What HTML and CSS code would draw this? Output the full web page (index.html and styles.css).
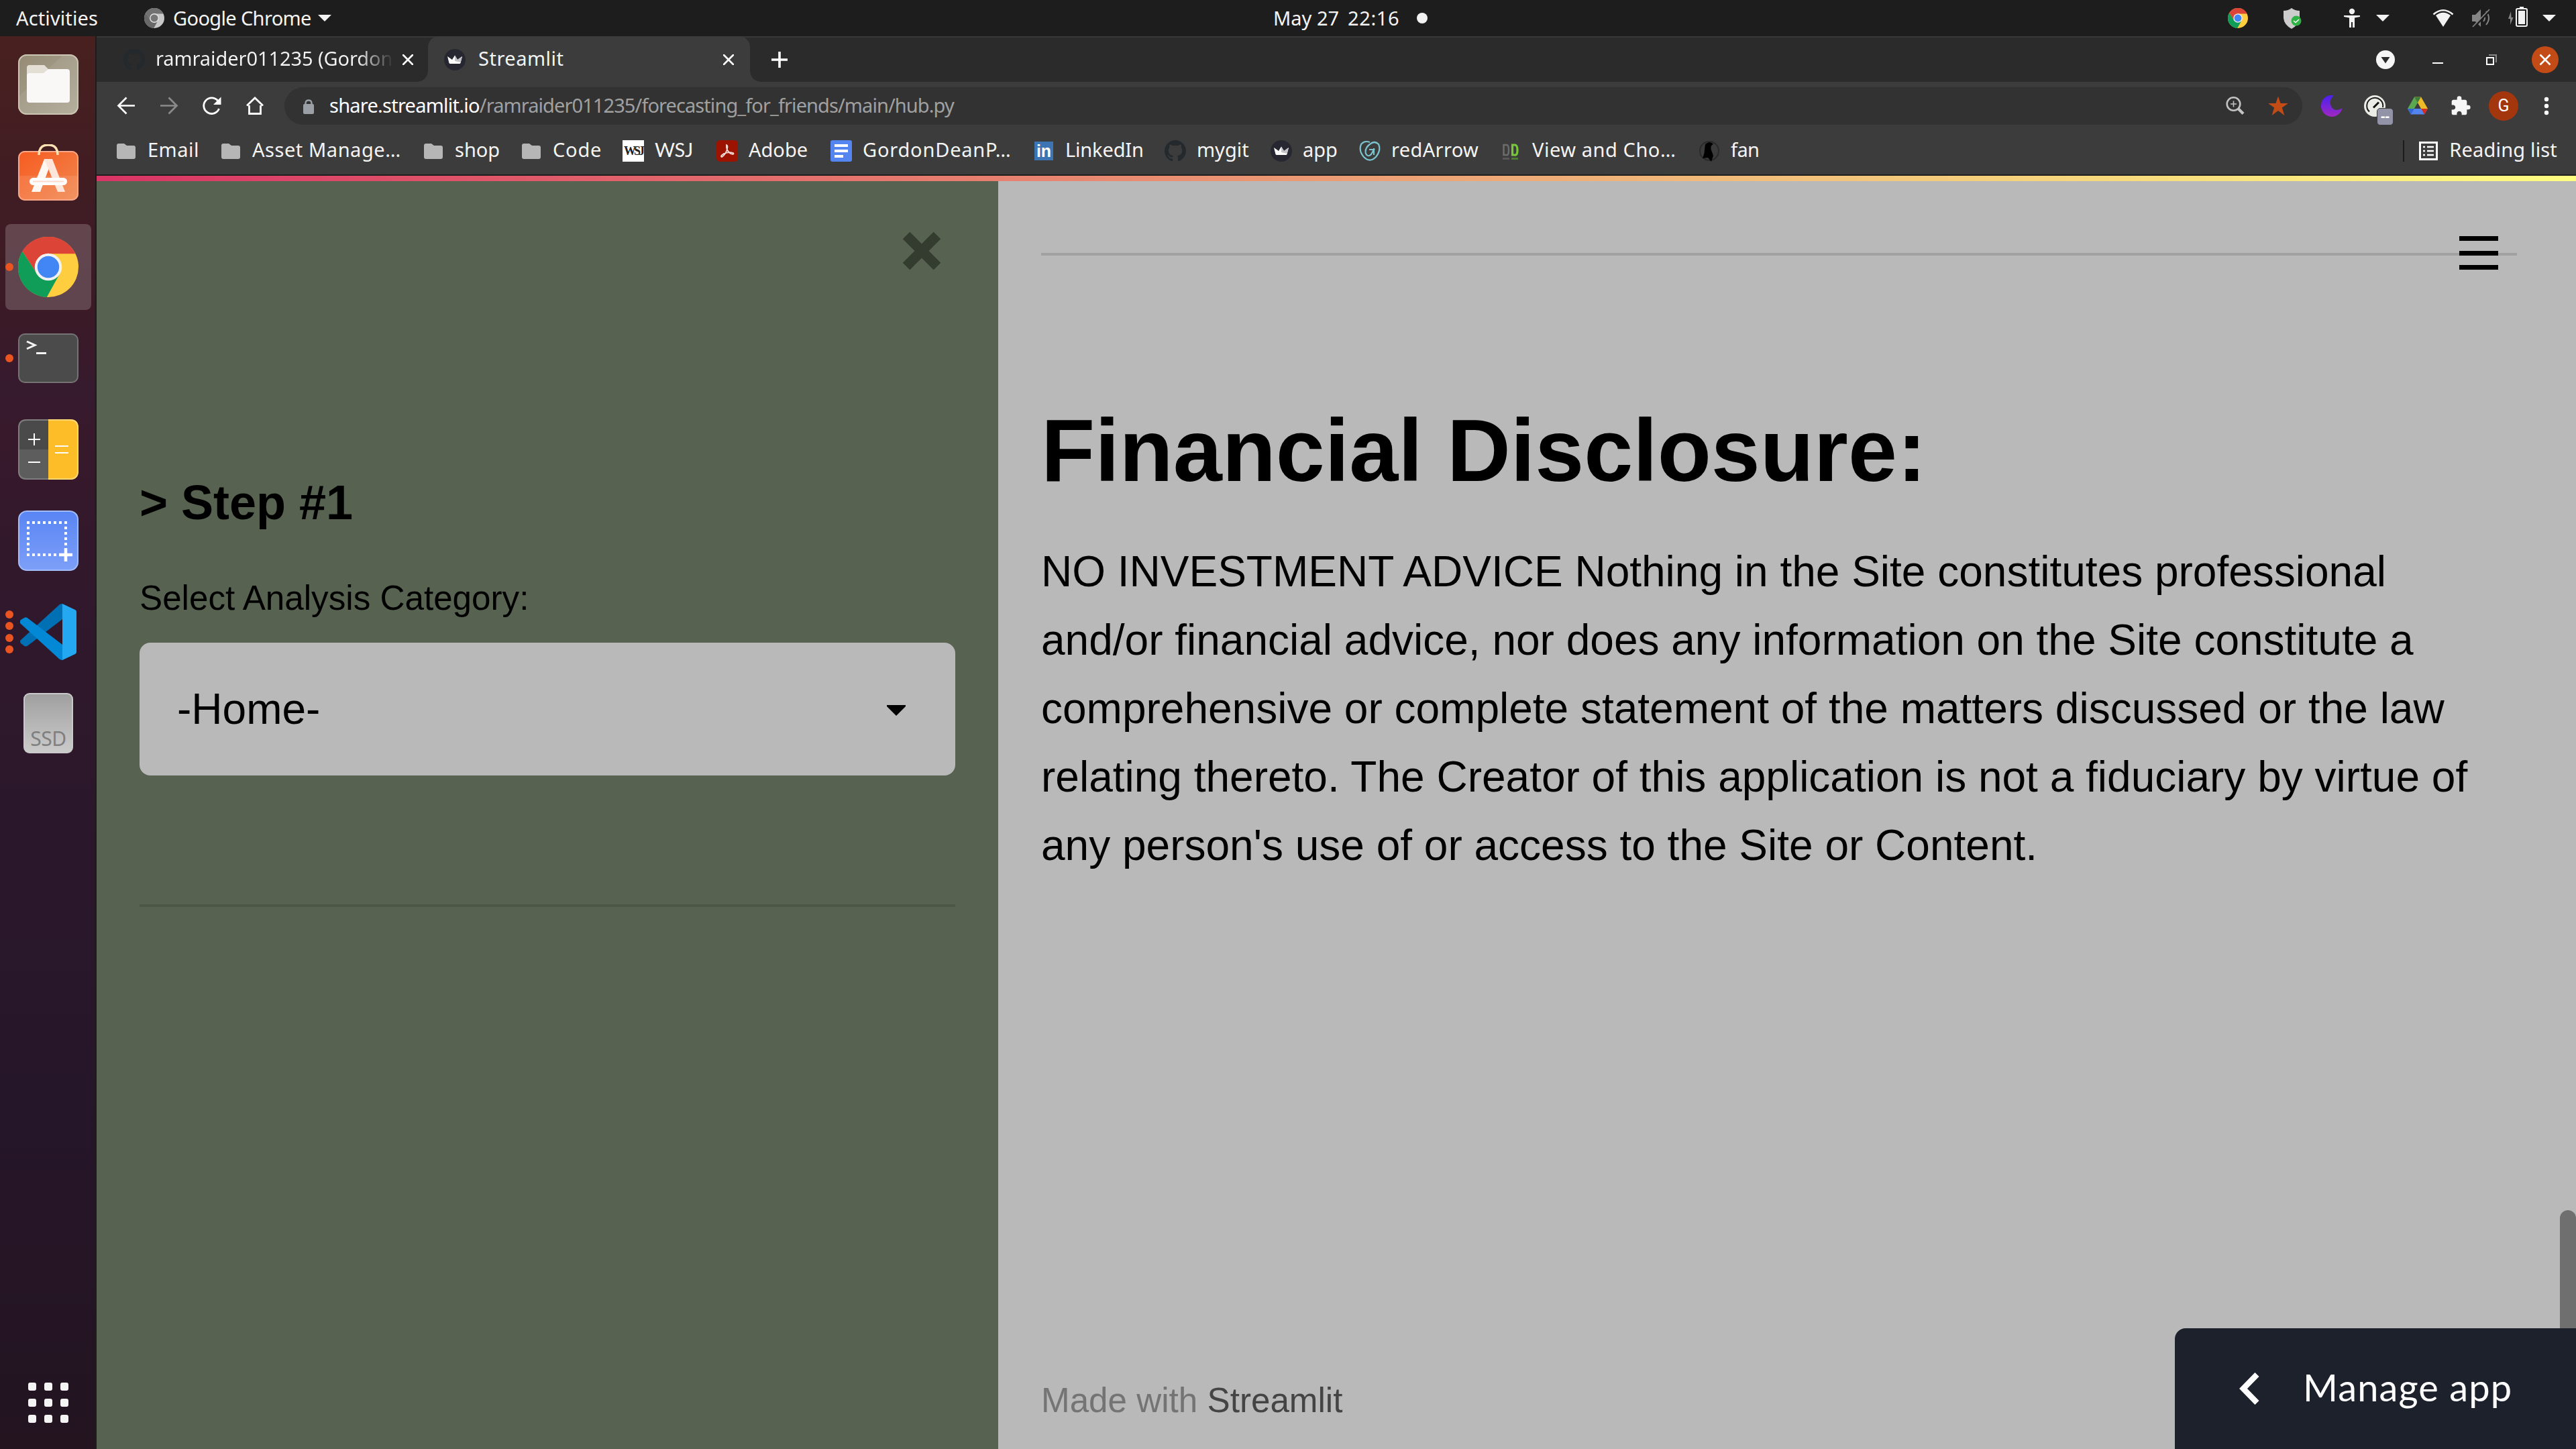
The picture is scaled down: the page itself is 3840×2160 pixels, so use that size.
FILE: index.html
```html
<!DOCTYPE html>
<html lang="en">
<head>
<meta charset="utf-8">
<title>Streamlit</title>
<link rel="stylesheet" href="styles.css">
</head>
<body>
<svg class="defs" width="0" height="0" aria-hidden="true">
  <defs>
    <symbol id="chrome" viewBox="0 0 100 100">
      <circle cx="50" cy="50" r="50" fill="#ffcd40"/>
      <path d="M7 24A50 50 0 0 1 94.9 28H50L31 61Z" fill="#db4437"/>
      <path d="M7 24L31 61L50 72L69 61L47.5 100A50 50 0 0 1 7 24Z" fill="#0f9d58"/>
      <circle cx="50" cy="50" r="22.5" fill="#f1f1f1"/>
      <circle cx="50" cy="50" r="18" fill="#4285f4"/>
    </symbol>
    <symbol id="chrome-gray" viewBox="0 0 100 100">
      <circle cx="50" cy="50" r="50" fill="#c8c8c8"/>
      <path d="M7 24A50 50 0 0 1 94.9 28H50L31 61Z" fill="#717171"/>
      <path d="M7 24L31 61L50 72L69 61L47.5 100A50 50 0 0 1 7 24Z" fill="#686868"/>
      <circle cx="50" cy="50" r="23" fill="#e6e6e6"/>
      <circle cx="50" cy="50" r="18.500" fill="#777"/>
    </symbol>
    <symbol id="github" viewBox="0 0 16 16">
      <path fill="#24292e" d="M8 0C3.58 0 0 3.58 0 8c0 3.54 2.29 6.53 5.47 7.59.4.07.55-.17.55-.38 0-.19-.01-.82-.01-1.49-2.01.37-2.53-.49-2.69-.94-.09-.23-.48-.94-.82-1.13-.28-.15-.68-.52-.01-.53.63-.01 1.08.58 1.23.82.72 1.21 1.87.87 2.33.66.07-.52.28-.87.51-1.07-1.78-.2-3.64-.89-3.64-3.95 0-.87.31-1.59.82-2.15-.08-.2-.36-1.02.08-2.12 0 0 .67-.21 2.2.82.64-.18 1.32-.27 2-.27s1.36.09 2 .27c1.53-1.04 2.2-.82 2.2-.82.44 1.1.16 1.92.08 2.12.51.56.82 1.27.82 2.15 0 3.07-1.87 3.75-3.65 3.95.29.25.54.73.54 1.48 0 1.07-.01 1.93-.01 2.2 0 .21.15.46.55.38A8.01 8.01 0 0 0 16 8c0-4.42-3.58-8-8-8z"/>
    </symbol>
    <symbol id="crown" viewBox="0 0 32 32">
      <circle cx="16" cy="16" r="16" fill="#262730"/>
      <path d="M5 11L12 16L16 9.500L20 16L27 11L24.500 21Q24 22 23 22H9Q8 22 7.500 21Z" fill="#fff"/>
      <path d="M16 9.500L20 16L27 11L24.500 20L16 18Z" fill="#c4c4c8"/>
    </symbol>
    <symbol id="folder" viewBox="0 0 32 32">
      <path d="M2 8Q2 5 5 5H13L17 8H27Q30 8 30 11V25Q30 28 27 28H5Q2 28 2 25Z" fill="#b6b6b6"/>
    </symbol>
    <symbol id="caret" viewBox="0 0 20 10"><path d="M0 0H20L10 10Z" fill="#f2f2f2"/></symbol>
    <symbol id="close" viewBox="0 0 16 16"><path d="M1 1L15 15M15 1L1 15" stroke="#fff" stroke-width="2.600" stroke-linecap="round" fill="none"/></symbol>
  </defs>
</svg>

<header class="topbar">
  <div class="topbar-left">
    <span class="activities">Activities</span>
    <svg class="i30"><use href="#chrome-gray"/></svg>
    <span class="app-name">Google Chrome</span>
    <svg class="caret"><use href="#caret"/></svg>
  </div>
  <div class="clock"><span class="date">May 27</span><span class="time">22:16</span><i class="clock-dot"></i></div>
  <div class="tray">
    <svg class="i30 tray-chrome"><use href="#chrome"/></svg>
    <svg class="i32 tray-shield" viewBox="0 0 32 32">
      <path d="M16 1Q21 5 28 5V16Q27 26 16 32Q5 26 4 16V5Q11 5 16 1Z" fill="#ccc"/>
      <circle cx="23" cy="20" r="7.500" fill="#2fb344"/><path d="M19 20L22 22.500L27 18" stroke="#fff" stroke-width="1.500" fill="none"/>
    </svg>
    <svg class="i32 tray-access" viewBox="0 0 32 32">
      <circle cx="16" cy="6" r="4.200" fill="#f2f2f2"/><path d="M4 12H28V14L20 15.500V30H17V22H15V30H12V15.500L4 14Z" fill="#f2f2f2"/>
    </svg>
    <svg class="caret"><use href="#caret"/></svg>
    <svg class="i32 tray-wifi" viewBox="0 0 32 32">
      <path d="M1.500 10.500Q16 -2 30.500 10.500" stroke="#f2f2f2" stroke-width="2.600" fill="none"/><path d="M5 12Q16 3.500 27 12L16 29Z" fill="#f2f2f2"/>
    </svg>
    <svg class="i32 tray-mute" viewBox="0 0 32 32">
      <path d="M3 11H8L16 3V29L8 21H3Z" fill="#858585"/>
      <path d="M20 11Q24 16 20 21M24 6Q32 16 24 26" stroke="#858585" stroke-width="2" fill="none"/>
      <path d="M5 30L30 4" stroke="#1d1d1d" stroke-width="3.500"/><path d="M4 29L29 3" stroke="#858585" stroke-width="1.800"/>
    </svg>
    <svg class="i32 tray-battery" viewBox="0 0 32 32">
      <path d="M5 7L1 18H4V27L8.500 16H5.500Z" fill="#858585"/>
      <path d="M18 0H24V3H18Z" fill="#f2f2f2"/><rect x="13" y="3" width="16" height="26" rx="2" fill="none" stroke="#f2f2f2" stroke-width="2"/><rect x="16" y="6" width="10" height="20" fill="#f2f2f2"/>
    </svg>
    <svg class="caret tray-menu"><use href="#caret"/></svg>
  </div>
</header>

<div class="desktop">
  <nav class="dock">
    <div class="dock-item">
      <svg width="94" height="94" viewBox="-2 -2 94 94">
        <defs><linearGradient id="gf" x2="1" y2="1"><stop offset="0" stop-color="#958b75"/><stop offset="1" stop-color="#b0a997"/></linearGradient></defs>
        <rect x="0" y="0" width="90" height="90" rx="13" fill="url(#gf)"/><path d="M2 62L66 2H78Q88 2 88 12V88H12Q2 88 2 78Z" fill="#fff" opacity=".07"/>
        <rect x="1" y="1" width="88" height="88" rx="12" fill="none" stroke="#cbc5b4" stroke-width="2"/>
        <path d="M13 34V20Q13 16 17 16H39L45 22V34Z" fill="#e3dfd4"/>
        <path d="M17 28H38L45 22H73Q77 22 77 26V68Q77 72 73 72H17Q13 72 13 68V32Q13 28 17 28Z" fill="#f9f8f7"/>
      </svg>
    </div>
    <div class="dock-item">
      <svg width="94" height="94" viewBox="-2 -2 94 94">
        <defs><linearGradient id="gs" x2="1" y2="1"><stop offset="0" stop-color="#f75b20"/><stop offset="1" stop-color="#f08850"/></linearGradient></defs>
        <rect x="0" y="8" width="90" height="74" rx="10" fill="url(#gs)"/><path d="M1 45H89V72Q89 81 80 81H10Q1 81 1 72Z" fill="#fff" opacity=".1"/>
        <rect x="1" y="9" width="88" height="72" rx="9" fill="none" stroke="#f8a888" stroke-width="2"/>
        <path d="M31 14Q31 -1 45 -1Q59 -1 59 14" fill="none" stroke="#fde3b4" stroke-width="3.500"/>
        <path d="M39 20H51L33 69H20Z" fill="#fff8f2"/><path d="M39 20H51L70 69H59Z" fill="#fde5da"/>
        <rect x="17" y="48" width="56" height="11" rx="5.500" fill="#fff"/><path d="M22 53.500H68" stroke="#fbd9cc" stroke-width="2"/>
      </svg>
    </div>
    <div class="dock-item active">
      <i class="runs"><b></b></i>
      <svg width="90" height="90"><use href="#chrome"/></svg>
    </div>
    <div class="dock-item">
      <i class="runs"><b></b></i>
      <svg width="94" height="94" viewBox="-2 -2 94 94">
        <rect x="1" y="9" width="88" height="72" rx="9" fill="#4b4b4b" stroke="#747474" stroke-width="2"/>
        <path d="M13 20L25 25.500L13 31" fill="none" stroke="#f4f4f4" stroke-width="3"/><path d="M27 37.500H42" stroke="#f4f4f4" stroke-width="3"/>
      </svg>
    </div>
    <div class="dock-item">
      <svg width="94" height="94" viewBox="-2 -2 94 94">
        <path d="M45 0H13Q0 0 0 13V45H45Z" fill="#4a4a4a"/><path d="M0 45H45V90H13Q0 90 0 77Z" fill="#5d5d5d"/>
        <path d="M45 0H77Q90 0 90 13V77Q90 90 77 90H45Z" fill="#fdbd29"/>
        <path d="M45 1H13Q1 1 1 13V77Q1 89 13 89H45" fill="none" stroke="#7e7e7e" stroke-width="2"/><path d="M45 1H77Q89 1 89 13V77Q89 89 77 89H45" fill="none" stroke="#ffd873" stroke-width="2"/>
        <path d="M15 30H33M24 21V39M15 64H33M55 40H75M55 50H75" stroke="#fff" stroke-width="2"/>
      </svg>
    </div>
    <div class="dock-item">
      <svg width="94" height="94" viewBox="-2 -2 94 94">
        <defs><linearGradient id="gc" x2="0" y2="1"><stop offset="0" stop-color="#5985f4"/><stop offset="1" stop-color="#7d9ff8"/></linearGradient></defs>
        <rect x="1" y="1" width="88" height="88" rx="12" fill="url(#gc)" stroke="#a3bcfb" stroke-width="2"/>
        <path d="M13 18H73" stroke="#fff" stroke-width="4" stroke-dasharray="4 4"/><path d="M13 66H58" stroke="#fff" stroke-width="4" stroke-dasharray="4 4"/>
        <path d="M15 24V66M71 24V56" stroke="#fff" stroke-width="4" stroke-dasharray="4 4"/>
        <path d="M61 66H81M71 56V76" stroke="#fff" stroke-width="4.500"/>
      </svg>
    </div>
    <div class="dock-item">
      <i class="runs"><b></b><b></b><b></b><b></b></i>
      <svg width="84" height="84" viewBox="0 0 84 84">
        <path d="M59 1Q61 0 63 0V23L12 62Q8 65 5 62L1 59Q-1 56 1 54Z" fill="#0070b4"/>
        <path d="M0 29Q-1 26 1 24L6 21Q9 19 12 22L63 61V84Q60 84 58 82Z" fill="#0388d6"/>
        <path d="M63 0L82 9Q84 10 84 12V72Q84 74 82 75L63 84Z" fill="#25a8f2"/>
      </svg>
    </div>
    <div class="dock-item">
      <div class="ssd">SSD</div>
    </div>
    <div class="app-grid"><b></b><b></b><b></b><b></b><b></b><b></b><b></b><b></b><b></b></div>
  </nav>

  <section class="window">
    <div class="tabstrip">
      <div class="tab">
        <svg class="i32"><use href="#github"/></svg>
        <span class="tab-title fade">ramraider011235 (Gordon</span>
        <svg class="i16"><use href="#close"/></svg>
      </div>
      <div class="tab tab-active">
        <svg class="i32"><use href="#crown"/></svg>
        <span class="tab-title streamlit">Streamlit</span>
        <svg class="i16"><use href="#close"/></svg>
      </div>
      <svg class="new-tab" width="24" height="24"><path d="M12 0V24M0 12H24" stroke="#fff" stroke-width="3.600"/></svg>
      <div class="controls">
        <svg width="28" height="28"><circle cx="14" cy="14" r="14" fill="#f6f6f6"/><path d="M7.500 10H20.500L14 19.500Z" fill="#2b2b2b"/></svg>
        <svg width="16" height="28"><path d="M0 19H16" stroke="#fff" stroke-width="2"/></svg>
        <svg width="16" height="16"><path d="M4 1H15V12" stroke="#888" stroke-width="2" fill="none"/><rect x="1" y="5" width="10" height="10" fill="none" stroke="#fff" stroke-width="2"/></svg>
        <svg width="40" height="40"><circle cx="20" cy="20" r="20" fill="#c34b16"/><path d="M12.500 12.500L27.500 27.500M27.500 12.500L12.500 27.500" stroke="#fff" stroke-width="2.600"/></svg>
      </div>
    </div>

    <div class="toolbar">
      <div class="nav">
        <svg class="i32" viewBox="0 0 32 32"><path d="M29 15.500H5M16.500 3.500L4.500 15.500L16.500 27.500" stroke="#fff" stroke-width="2.700" fill="none"/></svg>
        <svg class="i32" viewBox="0 0 32 32"><path d="M3 15.500H27M15.500 3.500L27.500 15.500L15.500 27.500" stroke="#8a8a8a" stroke-width="2.700" fill="none"/></svg>
        <svg class="i32" viewBox="0 0 32 32"><path d="M26.500 20A11.800 11.800 0 1 1 24.500 8" stroke="#fff" stroke-width="2.800" fill="none"/><path d="M29.500 2.500V14H18Z" fill="#fff"/></svg>
        <svg class="i32" viewBox="0 0 32 32"><path d="M7.500 15V27.500H24.500V15M4 15.500L16 4L28 15.500" stroke="#fff" stroke-width="2.800" fill="none"/></svg>
      </div>
      <div class="omnibox">
        <svg class="lock" width="16" height="22"><path d="M3.500 8V6Q3.500 1.500 8 1.500T12.500 6V8" stroke="#9aa0a6" stroke-width="2.400" fill="none"/><rect y="7" width="16" height="15" rx="2" fill="#9aa0a6"/></svg>
        <span class="url"><span class="host">share.streamlit.io</span><span class="path">/ramraider011235/forecasting_for_friends/main/hub.py</span></span>
        <svg class="i32 zoomed" viewBox="0 0 32 32"><circle cx="13.500" cy="13" r="9.800" fill="none" stroke="#c3c3c3" stroke-width="2.600"/><path d="M13.500 8.500V17.500M9 13H18" stroke="#c3c3c3" stroke-width="1.600"/><path d="M20.500 20L28 27.500" stroke="#c3c3c3" stroke-width="4.200"/></svg>
        <svg class="i32" viewBox="0 0 32 32"><path d="M16 1.500L19.600 12H31L21.800 18.500L25.400 30L16 23L6.600 30L10.200 18.500L1 12H12.400Z" fill="#c34b16"/></svg>
      </div>
      <div class="extensions">
        <svg class="i32" viewBox="0 0 32 32"><defs><linearGradient id="gm" x2="0" y2="1"><stop offset="0" stop-color="#4a20f0"/><stop offset="1" stop-color="#a028c0"/></linearGradient></defs><path d="M19 .2A16 16 0 1 0 31.500 19.500Q21 25 16 18Q10 9 19 .2Z" fill="url(#gm)"/></svg>
        <span class="gauge">
          <svg class="i32" viewBox="0 0 32 32"><circle cx="16" cy="16" r="16" fill="#ecece6"/><path d="M8 24.500A12 12 0 1 1 28 18" stroke="#1c1c1c" stroke-width="2" fill="none"/><path d="M14 18.500L22 10.500" stroke="#111" stroke-width="3"/></svg>
          <i class="badge">--</i>
        </span>
        <svg class="i32" viewBox="0 0 32 32"><path d="M11 2.500H21L31 20H21L16 11Z" fill="#eebb28"/><path d="M11 2.500L1 20L6 28.500L16 11Z" fill="#5aa84f"/><path d="M11 2.500H21L16 11Z" fill="#3f7d3a"/><path d="M1 20H31L26 28.500H6Z" fill="#5485ee"/><path d="M21 20H31L26 28.500Z" fill="#d62d20"/><path d="M1 20H11L6 28.500Z" fill="#3367d6"/></svg>
        <svg class="i32" viewBox="0 0 24 24"><path fill="#f6f6f6" d="M20.500 11H19V7c0-1.100-.9-2-2-2h-4V3.500a2.500 2.500 0 0 0-5 0V5H4c-1.100 0-1.990.9-1.990 2v3.800H3.500c1.490 0 2.700 1.210 2.700 2.700s-1.210 2.700-2.700 2.700H2V20c0 1.100.9 2 2 2h3.800v-1.500c0-1.490 1.210-2.700 2.700-2.700 1.490 0 2.700 1.210 2.700 2.700V22H17c1.100 0 2-.9 2-2v-4h1.500a2.500 2.500 0 0 0 0-5z"/></svg>
        <span class="avatar">G</span>
        <svg class="i32" viewBox="0 0 32 32"><circle cx="16" cy="6" r="3.200" fill="#fff"/><circle cx="16" cy="16" r="3.200" fill="#fff"/><circle cx="16" cy="26" r="3.200" fill="#fff"/></svg>
      </div>
    </div>

    <div class="bookmarks">
      <div class="bm"><svg class="i32"><use href="#folder"/></svg><span class="l50">Email</span></div>
      <div class="bm"><svg class="i32"><use href="#folder"/></svg><span class="l60">Asset Manage…</span></div>
      <div class="bm"><svg class="i32"><use href="#folder"/></svg><span class="l0">shop</span></div>
      <div class="bm"><svg class="i32"><use href="#folder"/></svg><span class="l70">Code</span></div>
      <div class="bm"><span class="wsj">WSJ</span><span class="wsj-label">WSJ</span></div>
      <div class="bm"><svg class="i32" viewBox="0 0 32 32"><rect width="32" height="32" rx="5" fill="#9c1400"/><path d="M15 7Q18 8 15 16Q12 23 8 25Q5 24 11 20Q18 17 25 19Q27 22 21 20Q14 15 15 7Z" fill="none" stroke="#f3dcd8" stroke-width="1.800"/></svg><span class="l0">Adobe</span></div>
      <div class="bm"><svg class="i32" viewBox="0 0 32 32"><rect width="32" height="32" rx="3" fill="#5485f0"/><path d="M6 8H26M6 16H26M6 24H19" stroke="#fff" stroke-width="4"/></svg><span class="l80">GordonDeanP…</span></div>
      <div class="bm"><span class="linkedin">in</span><span class="l-20">LinkedIn</span></div>
      <div class="bm"><svg class="i32"><use href="#github"/></svg><span class="l0">mygit</span></div>
      <div class="bm"><svg class="i32"><use href="#crown"/></svg><span class="l0">app</span></div>
      <div class="bm"><svg class="i32" viewBox="0 0 32 32"><path d="M16 3Q8 0 3 6Q-1 16 7 25Q16 34 25 25Q33 15 29 6Q23 0 16 6Q8 12 10 20Q13 26 18 21L22 14H15" fill="none" stroke="#7cc4cf" stroke-width="2.200"/><path d="M22 12V22" fill="none" stroke="#7cc4cf" stroke-width="2"/></svg><span class="l30">redArrow</span></div>
      <div class="bm"><svg class="i32" viewBox="0 0 32 32"><path d="M5.500 7H10Q13 7 13 15T10 22H5.500Z" fill="none" stroke="#6c6c6c" stroke-width="2.500"/><path d="M18.500 7H22Q26 7 26 15T22 22H18.500Z" fill="none" stroke="#78c83c" stroke-width="3.200"/><path d="M4 27.500H14" stroke="#585858" stroke-width="3"/><path d="M17 27.500H27" stroke="#4f7c33" stroke-width="3"/></svg><span class="l60">View and Cho…</span></div>
      <div class="bm"><svg class="i32" viewBox="0 0 32 32"><circle cx="16" cy="16" r="14" fill="none" stroke="#2a2a2a" stroke-width="2"/><path d="M10 6Q17 0 22 6Q17 8 19 15L22 23L19 32L14 26L6 27Q9 20 9 14Z" fill="#000"/></svg><span class="l-60">fan</span></div>
      <div class="reading">
        <svg width="28" height="28"><rect x="1.500" y="1.500" width="25" height="25" fill="none" stroke="#fff" stroke-width="3"/><path d="M6 8H9M12 8H22M6 14H9M12 14H22M6 20H9M12 20H22" stroke="#fff" stroke-width="2.600"/></svg>
        <span class="l20">Reading list</span>
      </div>
    </div>

    <div class="decoration"></div>

    <div class="page">
      <aside class="sidebar">
        <svg class="sidebar-close" width="58" height="56"><path d="M6 5L52 51M52 5L6 51" stroke="#343c30" stroke-width="15"/></svg>
        <h3>&gt; Step #1</h3>
        <label>Select Analysis Category:</label>
        <div class="select"><span>-Home-</span><svg width="28" height="16"><path d="M0 0H28V2L14 16L0 2Z" fill="#000"/></svg></div>
        <hr class="side-rule">
      </aside>
      <main class="main">
        <svg class="menu" width="58" height="50"><path d="M0 3.500H58M0 25.500H58M0 46.500H58" stroke="#000" stroke-width="7"/></svg>
        <hr class="main-rule">
        <h2>Financial Disclosure:</h2>
        <p>NO INVESTMENT ADVICE Nothing in the Site constitutes professional and/or financial advice, nor does any information on the Site constitute a comprehensive or complete statement of the matters discussed or the law relating thereto. The Creator of this application is not a fiduciary by virtue of any person's use of or access to the Site or Content.</p>
        <footer>Made with <a>Streamlit</a></footer>
        <i class="scrollbar"></i>
        <div class="manage"><svg width="30" height="48"><path d="M26.500 3L6 24L26.500 45" stroke="#fff" stroke-width="8.500" fill="none"/></svg><span>Manage app</span></div>
      </main>
    </div>
  </section>
</div>
</body>
</html>
```
FILE: styles.css
```css
* { box-sizing: border-box; }
body {
  margin: 0;
  width: 3840px;
  height: 2160px;
  overflow: hidden;
  display: flex;
  flex-direction: column;
  background: #1d1d1d;
  font: 29px/40px "Noto Sans", sans-serif;
  color: #f4f4f4;
}
svg { display: block; flex: none; }
.defs { position: absolute; }
.i16 { width: 16px; height: 16px; }
.i30 { width: 30px; height: 30px; }
.i32 { width: 32px; height: 32px; }
.caret { width: 20px; height: 10px; }

/* desktop bar */
.topbar { height: 54px; flex: none; display: grid; grid-template-columns: 1898px 1fr auto; align-items: center; }
.topbar-left { display: flex; align-items: center; padding-left: 24px; white-space: nowrap; }
.activities { width: 191px; letter-spacing: .12px; }
.app-name { width: 214px; margin-left: 13px; letter-spacing: -.64px; }
.topbar-left .caret { margin-left: 2px; }
.clock { display: flex; align-items: center; }
.date { width: 111px; letter-spacing: 0; }
.time { letter-spacing: .6px; }
.clock-dot { width: 16px; height: 16px; border-radius: 50%; background: #f2f2f2; margin-left: 26px; }
.tray { display: flex; align-items: center; padding-right: 30px; }
.tray-shield { margin-left: 49px; }
.tray-access { margin-left: 58px; }
.tray-access + .caret { margin-left: 20px; }
.tray-wifi { margin-left: 64px; }
.tray-mute { margin-left: 24px; }
.tray-battery { margin-left: 24px; margin-bottom: 2px; }
.tray-menu { margin-left: 20px; }

.desktop { flex: 1; display: flex; min-height: 0; }

/* dock */
.dock {
  width: 144px;
  flex: none;
  display: flex;
  flex-direction: column;
  padding-top: 4px;
  border-right: 2px solid #201a1c;
  background: linear-gradient(#48211f 0, #421d22 8%, #3b1a27 20%, #361a2e 25%, #37192b 28%, #30182c 42%, #2b172b 55%, #26162a 75%, #231420 100%);
}
.dock-item { position: relative; height: 136px; flex: none; display: grid; place-items: center; padding-left: 2px; }
.dock-item.active::before { content: ""; position: absolute; left: 8px; top: 4px; width: 128px; height: 128px; border-radius: 8px; background: rgba(255,255,255,.19); }
.dock-item svg { position: relative; }
.runs { position: absolute; left: 8px; top: 0; bottom: 0; display: flex; flex-direction: column; justify-content: center; gap: 5.500px; }
.runs b { width: 12px; height: 12px; border-radius: 50%; background: #e95420; }
.ssd {
  width: 74px; height: 90px; border-radius: 9px; border: 2px solid #c9c9c9;
  background: linear-gradient(#a0a0a0, #cbcbcb);
  display: flex; align-items: flex-end; justify-content: center;
  font-size: 30px; line-height: 41px; letter-spacing: -.5px; color: #808080;
}
.app-grid { margin: auto auto 39px; padding-left: 2px; display: grid; grid-template-columns: repeat(3, 12px); gap: 12px; }
.app-grid b { height: 12px; border-radius: 3px; background: #f4f4f4; }

/* browser chrome */
.window { flex: 1; min-width: 0; display: flex; flex-direction: column; background: #3c3c3c; }
.tabstrip { height: 68px; flex: none; display: flex; align-items: center; background: #2b2b2b; border-top: 2px solid #373737; padding-left: 16px; }
.tab { position: relative; width: 478px; height: 66px; display: flex; align-items: center; gap: 16px; padding-left: 24px; }
.tab-active { width: 480px; height: 68px; margin-top: -2px; background: #3c3c3c; border-radius: 16px 16px 0 0; padding: 2px 0 0 24px; }
.tab-active::before, .tab-active::after { content: ""; position: absolute; bottom: 0; width: 16px; height: 16px; }
.tab-active::before { left: -16px; background: radial-gradient(circle at 0 0, transparent 15.500px, #3c3c3c 16px); }
.tab-active::after { right: -16px; background: radial-gradient(circle at 100% 0, transparent 15.500px, #3c3c3c 16px); }
.tab-title { width: 352px; height: 40px; margin-top: -4px; white-space: nowrap; }
.tab-title.fade { letter-spacing: -.08px; color: transparent; background: linear-gradient(90deg, #f4f4f4 300px, #2b2b2b 355px); -webkit-background-clip: text; background-clip: text; }
.tab-title.streamlit { padding-left: 3px; letter-spacing: .5px; }
.new-tab { margin-left: 32px; }
.controls { margin-left: auto; padding-right: 26px; display: flex; align-items: center; }
.controls svg + svg { margin-left: 56px; }
.controls svg:nth-child(3) { margin-left: 64px; }
.controls svg:nth-child(4) { margin-left: 52px; }

.toolbar { height: 72px; flex: none; display: flex; align-items: center; padding: 0 28px; }
.nav { display: flex; gap: 32px; }
.omnibox { width: 3008px; height: 56px; flex: none; margin: 0 28px; border-radius: 28px; background: #323232; display: flex; align-items: center; padding: 0 20px 0 28px; }
.lock { margin-bottom: -1px; }
.url { margin: -2px 0 0 23px; white-space: nowrap; }
.host { color: #fff; letter-spacing: -.75px; }
.path { color: #a0a0a0; letter-spacing: -.92px; }
.zoomed { margin: 0 32px 0 auto; }
.extensions { display: flex; align-items: center; gap: 32px; }
.gauge { position: relative; }
.badge { position: absolute; left: 19px; top: 19px; width: 25px; height: 26px; border: 1px solid #3c3c3c; border-radius: 5px; background: #9393a8; color: #fff; font: bold 20px/22px "Noto Sans", sans-serif; text-align: center; }
.avatar { width: 44px; height: 44px; margin: 0 -6px; border-radius: 50%; background: #a4360e; color: #fff; font: 25px/44px Roboto, sans-serif; text-align: center; }

.bookmarks {
  height: 68px; flex: none; display: grid; align-items: center; padding: 0 28px 4px;
  grid-template-columns: 156px 302px 146px 152px 140px 170px 302px 196px 158px 132px 210px 296px auto 1fr;
  border-bottom: 2px solid #1e1e1e;
}
.bm { display: flex; align-items: center; gap: 16px; white-space: nowrap; }
.bm > span:last-child, .reading span { margin-top: -4px; }
.l-60 { letter-spacing: -.6px; }
.l-20 { letter-spacing: -.16px; }
.l20 { letter-spacing: .17px; }
.l30 { letter-spacing: .36px; }
.l50 { letter-spacing: .5px; }
.l60 { letter-spacing: .55px; }
.l70 { letter-spacing: .76px; }
.l80 { letter-spacing: .8px; }
.wsj-label { font-family: Lato, sans-serif; letter-spacing: -.3px; }
.wsj { width: 32px; height: 32px; background: #fff; color: #222; font: bold 18px/32px "Liberation Serif", serif; letter-spacing: -3px; text-align: center; }
.linkedin { width: 28px; height: 28px; margin: 0 2px; background: #3d74b4; color: #fff; font: bold 25px/29px "Liberation Sans", sans-serif; text-align: center; }
.reading { justify-self: end; display: flex; align-items: center; gap: 17px; padding-left: 22px; height: 32px; border-left: 2px solid #1c1c1c; white-space: nowrap; }

/* page */
.decoration { height: 8px; flex: none; background: linear-gradient(90deg, #d93565, #e5746d 30%, #f1ba7a 65%, #fffd80); }
.page { flex: 1; min-height: 0; display: flex; font-family: "Liberation Sans", sans-serif; color: #000; }
.sidebar { width: 1344px; flex: none; background: #576350; padding: 76px 64px 0; display: flex; flex-direction: column; }
.sidebar-close { align-self: flex-end; margin-right: 21px; }
h3 { margin: 302px 0 0; font-size: 72px; line-height: 90px; }
label { margin-top: 68px; font-size: 51.200px; line-height: 60px; }
.select { margin-top: 36px; height: 198px; border-radius: 16px; background: #b9b9b9; display: flex; align-items: center; justify-content: space-between; padding: 0 74px 0 56px; font-size: 64px; }
.select svg { margin-top: 4px; }
hr { border: 0; height: 4px; margin: 0; }
.side-rule { margin-top: 192px; background: #4d5746; }
.main { position: relative; flex: 1; background: #b9b9b9; padding: 107px 88px 0 64px; display: flex; flex-direction: column; }
.main-rule { background: #a1a1a1; }
.menu { position: absolute; right: 116px; top: 82px; }
h2 { margin: 213px 0 0; font-size: 131.200px; line-height: 156px; white-space: nowrap; }
p { margin: 51px 0 0; font-size: 64px; line-height: 102px; width: 2200px; }
footer { margin: auto 0 42px; font-size: 51.200px; line-height: 60px; color: #747474; }
footer a { color: #444; }
.scrollbar { position: absolute; right: 0; top: 1534px; bottom: 0; width: 24px; border-radius: 12px 12px 0 0; background: #6f6f6f; }
.manage {
  position: absolute; right: 0; bottom: 0; width: 598px; height: 180px; border-radius: 16px 0 0 0;
  background: #1d212c; color: #fff; display: flex; align-items: center; gap: 65px; padding-left: 96px;
  font: 56px/70px Lato, sans-serif; letter-spacing: 1.100px; white-space: nowrap;
}
.manage span { margin-top: -4px; }
```
